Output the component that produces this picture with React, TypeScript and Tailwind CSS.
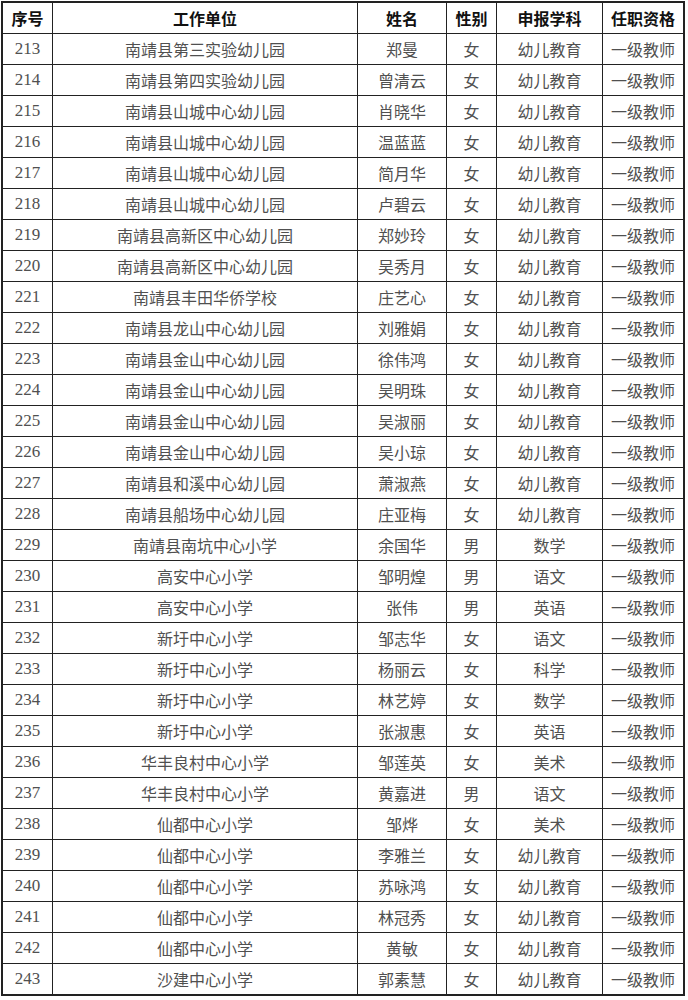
import React from "react"

type Row = [string, string, string, string, string]

const rows: Row[] = [
    ["南靖县第三实验幼儿园", "郑曼", "女", "幼儿教育", "一级教师"],
    ["南靖县第四实验幼儿园", "曾清云", "女", "幼儿教育", "一级教师"],
    ["南靖县山城中心幼儿园", "肖晓华", "女", "幼儿教育", "一级教师"],
    ["南靖县山城中心幼儿园", "温蓝蓝", "女", "幼儿教育", "一级教师"],
    ["南靖县山城中心幼儿园", "简月华", "女", "幼儿教育", "一级教师"],
    ["南靖县山城中心幼儿园", "卢碧云", "女", "幼儿教育", "一级教师"],
    ["南靖县高新区中心幼儿园", "郑妙玲", "女", "幼儿教育", "一级教师"],
    ["南靖县高新区中心幼儿园", "吴秀月", "女", "幼儿教育", "一级教师"],
    ["南靖县丰田华侨学校", "庄艺心", "女", "幼儿教育", "一级教师"],
    ["南靖县龙山中心幼儿园", "刘雅娟", "女", "幼儿教育", "一级教师"],
    ["南靖县金山中心幼儿园", "徐伟鸿", "女", "幼儿教育", "一级教师"],
    ["南靖县金山中心幼儿园", "吴明珠", "女", "幼儿教育", "一级教师"],
    ["南靖县金山中心幼儿园", "吴淑丽", "女", "幼儿教育", "一级教师"],
    ["南靖县金山中心幼儿园", "吴小琼", "女", "幼儿教育", "一级教师"],
    ["南靖县和溪中心幼儿园", "萧淑燕", "女", "幼儿教育", "一级教师"],
    ["南靖县船场中心幼儿园", "庄亚梅", "女", "幼儿教育", "一级教师"],
    ["南靖县南坑中心小学", "余国华", "男", "数学", "一级教师"],
    ["高安中心小学", "邹明煌", "男", "语文", "一级教师"],
    ["高安中心小学", "张伟", "男", "英语", "一级教师"],
    ["新圩中心小学", "邹志华", "女", "语文", "一级教师"],
    ["新圩中心小学", "杨丽云", "女", "科学", "一级教师"],
    ["新圩中心小学", "林艺婷", "女", "数学", "一级教师"],
    ["新圩中心小学", "张淑惠", "女", "英语", "一级教师"],
    ["华丰良村中心小学", "邹莲英", "女", "美术", "一级教师"],
    ["华丰良村中心小学", "黄嘉进", "男", "语文", "一级教师"],
    ["仙都中心小学", "邹烨", "女", "美术", "一级教师"],
    ["仙都中心小学", "李雅兰", "女", "幼儿教育", "一级教师"],
    ["仙都中心小学", "苏咏鸿", "女", "幼儿教育", "一级教师"],
    ["仙都中心小学", "林冠秀", "女", "幼儿教育", "一级教师"],
    ["仙都中心小学", "黄敏", "女", "幼儿教育", "一级教师"],
    ["沙建中心小学", "郭素慧", "女", "幼儿教育", "一级教师"],
]

// column widths incl. the 1px right rule
const cell = "flex items-center justify-center border-r border-[#222]"

export default function App() {
    return (
        <div className="bg-white w-[688px] h-[1000px] pt-[1px] pl-[1px] font-['Noto_Sans_CJK_SC',sans-serif] text-[16px]">
            <div className="w-[684px] border-2 border-[#222]">
                {/* header */}
                <div className="flex h-[31px] border-b border-[#222] font-bold text-[#111]">
                    <div className={`${cell} w-[50px]`}>序号</div>
                    <div className={`${cell} w-[305px]`}>工作单位</div>
                    <div className={`${cell} w-[89px]`}>姓名</div>
                    <div className={`${cell} w-[50px]`}>性别</div>
                    <div className={`${cell} w-[106px]`}>申报学科</div>
                    <div className="flex items-center justify-center flex-1">任职资格</div>
                </div>
                {rows.map((r, i) => (
                    <div
                        key={i}
                        className={`flex text-[#505050] ${i === rows.length - 1 ? "h-[30px]" : "h-[31px] border-b border-[#222]"}`}
                    >
                        <div className={`${cell} w-[50px] font-['Liberation_Serif',serif] text-[17px]`}>{213 + i}</div>
                        <div className={`${cell} w-[305px]`}>{r[0]}</div>
                        <div className={`${cell} w-[89px]`}>{r[1]}</div>
                        <div className={`${cell} w-[50px]`}>{r[2]}</div>
                        <div className={`${cell} w-[106px]`}>{r[3]}</div>
                        <div className="flex items-center justify-center flex-1">{r[4]}</div>
                    </div>
                ))}
            </div>
        </div>
    )
}
